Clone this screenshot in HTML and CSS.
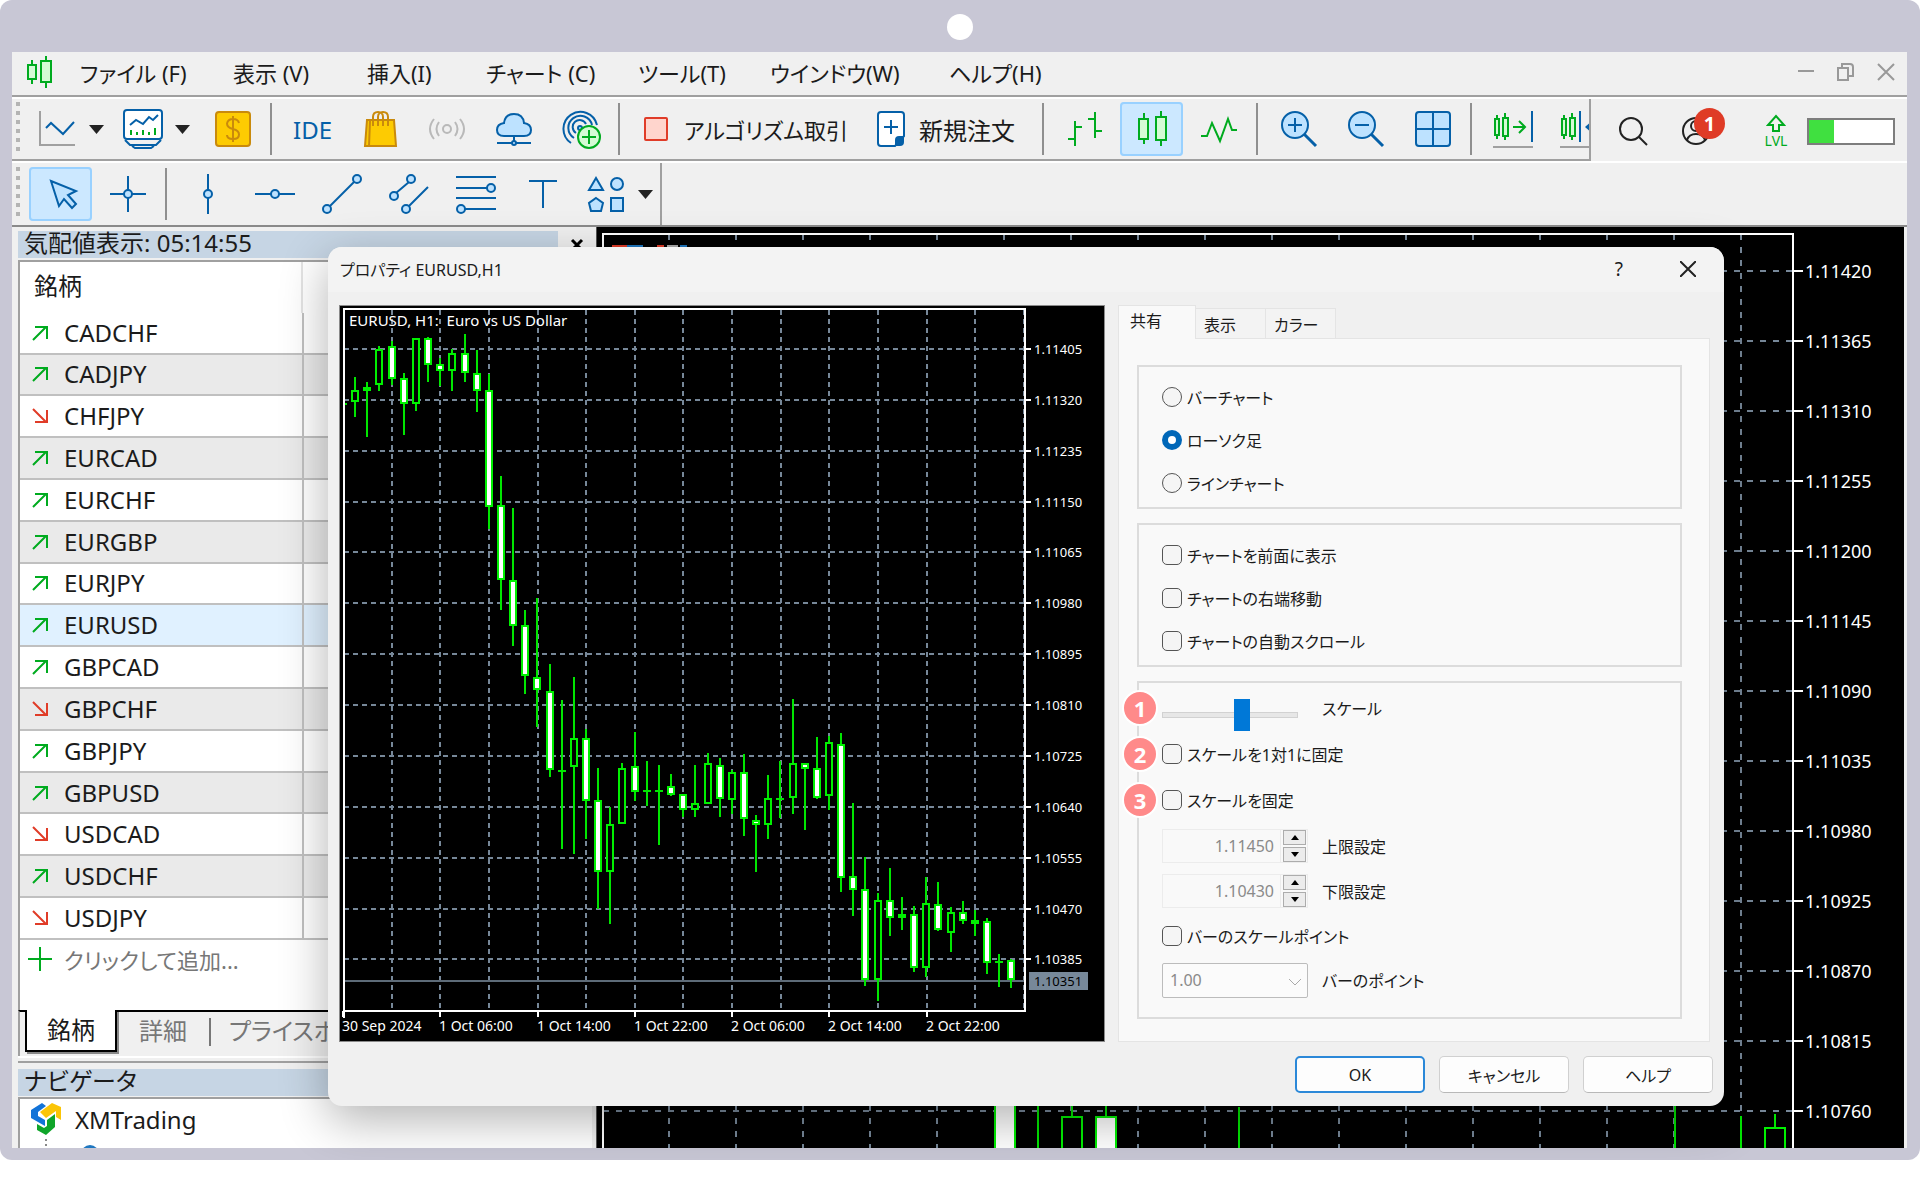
FILE: index.html
```html
<!DOCTYPE html>
<html lang="ja">
<head>
    <meta charset="UTF-8">
    <meta name="viewport" content="width=device-width, initial-scale=1.0">
    <title>プロパティ EURUSD,H1</title>
    <link rel="stylesheet" href="styles.css">
</head>
<body>
    <div class="frame">
        <div class="camera"></div>

        <div class="app">
            <!-- Menu -->
            <header class="menubar">
                <svg class="menu-logo" width="28" height="32" viewBox="0 0 28 32"><path class="candle-line" d="M6 4v5M6 23v5M20 0v5M20 26v6"/><path class="candle-box" d="M2 9h8v14H2zM15 5h10v21H15z"/></svg>
                <nav class="menu">
                    <a href="#">ファイル (F)</a>
                    <a href="#">表示 (V)</a>
                    <a href="#">挿入(I)</a>
                    <a href="#">チャート (C)</a>
                    <a href="#">ツール(T)</a>
                    <a href="#">ウインドウ(W)</a>
                    <a href="#">ヘルプ(H)</a>
                </nav>
                <div class="window-buttons">
                    <button aria-label="最小化"><svg width="20" height="20" viewBox="0 0 20 20"><path d="M2 9h16"/></svg></button>
                    <button aria-label="元に戻す"><svg width="20" height="20" viewBox="0 0 20 20"><path d="M2 6h10v12H2z"/><path d="M6 5V2h8q3 0 3 3v9h-4"/></svg></button>
                    <button aria-label="閉じる"><svg width="20" height="20" viewBox="0 0 20 20"><path d="M2 2l16 16M18 2L2 18"/></svg></button>
                </div>
            </header>

            <!-- Main toolbar -->
            <div class="toolbar">
                <div class="tools">
                    <span class="grip"></span>
                    <button class="tool drop" aria-label="ライン">
                        <svg class="icon" viewBox="0 0 40 40"><path class="grey" d="M3 2v34h35"/><path class="blue" d="M9 19l5-5 12 11 11-12"/></svg>
                        <svg class="arrow" viewBox="0 0 15 9"><path d="M0 0h15L7.500 9z"/></svg>
                    </button>
                    <button class="tool drop" aria-label="インディケータ">
                        <svg class="icon" viewBox="0 0 40 40"><rect class="blue white" x="1" y="1" width="38" height="29" rx="3"/><path class="blue" d="M7 16l6-5 7 4 6-7 4 3 5-5M2 31l5 5h26l5-5M9 37l3 2h16l3-2"/><path class="green" d="M8 26v-5M14 26v-3M20 26v-5M26 26v-3M32 26v-7"/></svg>
                        <svg class="arrow" viewBox="0 0 15 9"><path d="M0 0h15L7.500 9z"/></svg>
                    </button>
                    <button class="tool" aria-label="預金">
                        <svg class="icon" viewBox="0 0 40 40"><rect class="gold" x="3" y="3" width="34" height="34" rx="3"/><path class="gold-line" d="M26 14q-1-4-6-4t-6 4.500q0 4 6 5.500t6 5.500q0 4.500-6 4.500t-6-4M20 7v26"/></svg>
                    </button>
                    <span class="sep"></span>
                    <button class="tool ide">IDE</button>
                    <button class="tool" aria-label="マーケット">
                        <svg class="icon" viewBox="0 0 40 40"><path class="gold" d="M7 11h27l2 26H5z"/><path class="gold-line" d="M13 17V8q0-5 5-5t5 5v9M18 17V8q0-5 5-5t5 5v9M10 12l-1 25"/></svg>
                    </button>
                    <button class="tool" aria-label="シグナル">
                        <svg class="icon" viewBox="0 0 40 40"><circle class="faint" cx="20" cy="20" r="4"/><path class="faint" d="M12 13q-5 7 0 14M28 13q5 7 0 14M7 10q-8 10 0 20M33 10q8 10 0 20"/></svg>
                    </button>
                    <button class="tool" aria-label="VPS">
                        <svg class="icon" viewBox="0 0 40 40"><path class="blue fill" d="M10 27q-7 0-7-6t7-7q1-9 10-9t10 9q7 1 7 7t-7 6z"/><path class="blue" d="M20 27v7M3 34h34"/><circle class="blue fill" cx="20" cy="34" r="2"/></svg>
                    </button>
                    <button class="tool" aria-label="コピー取引">
                        <svg class="icon" viewBox="0 0 40 40"><path class="blue" d="M10 34A17 17 0 1 1 36 16M13 29A12 12 0 1 1 31 16M15 24A7 7 0 1 1 25 15"/><circle class="blue fill" cx="19" cy="19" r="2"/><circle class="candle-box" cx="28" cy="28" r="11"/><path class="green" d="M28 21v14M21 28h14"/></svg>
                    </button>
                    <span class="sep"></span>
                    <button class="tool text algo">
                        <svg width="24" height="24" viewBox="0 0 24 24"><rect class="red" x="1" y="1" width="22" height="22" rx="1"/></svg>
                        アルゴリズム取引
                    </button>
                    <button class="tool text order">
                        <svg width="28" height="36" viewBox="0 0 28 36"><path class="blue white" d="M4 1h20q3 0 3 3v21L18 35H4q-3 0-3-3V4q0-3 3-3z"/><path class="solid-blue" d="M27 25v6q0 4-4 4h-5v-6q0-4 4-4z"/><path class="blue" d="M14 9v14M7 16h14"/></svg>
                        新規注文
                    </button>
                    <span class="sep"></span>
                    <button class="tool" aria-label="バーチャート">
                        <svg class="icon" viewBox="0 0 40 40"><path class="green" d="M10 12v25M10 18h7M3 30h7M30 3v26M23 10h7M30 22h7"/></svg>
                    </button>
                    <button class="tool active" aria-label="ローソク足">
                        <svg class="icon" viewBox="0 0 40 40"><path class="green" d="M12 4v6M12 30v5M29 2v6M29 31v6"/><path class="candle-box" d="M7 10h9v20H7zM24 8h10v23H24z"/></svg>
                    </button>
                    <button class="tool" aria-label="ラインチャート">
                        <svg class="icon" viewBox="0 0 40 40"><path class="green" d="M2 27h6l5-13 8 18 8-22 4 11h5"/></svg>
                    </button>
                    <span class="sep"></span>
                    <button class="tool" aria-label="ズームイン">
                        <svg class="icon" viewBox="0 0 40 40"><circle class="blue fill" cx="16" cy="16" r="13"/><path class="blue" d="M16 9v14M9 16h14"/><path class="blue thick" d="M25 25l12 12"/></svg>
                    </button>
                    <button class="tool" aria-label="ズームアウト">
                        <svg class="icon" viewBox="0 0 40 40"><circle class="blue fill" cx="16" cy="16" r="13"/><path class="blue" d="M9 16h14"/><path class="blue thick" d="M25 25l12 12"/></svg>
                    </button>
                    <button class="tool" aria-label="ウィンドウを並べる">
                        <svg class="icon" viewBox="0 0 40 40"><rect class="blue fill" x="3" y="3" width="34" height="34" rx="3"/><path class="blue" d="M20 3v34M3 20h34"/></svg>
                    </button>
                    <span class="sep"></span>
                    <button class="tool" aria-label="自動スクロール">
                        <svg class="icon" viewBox="0 0 40 40"><path class="green" d="M4 6v4M4 26v4M12 4v5M12 27v4M20 18h12M26 12l6 6-6 6"/><path class="candle-box" d="M2 10h4v16H2zM10 9h5v18h-5z"/><path class="blue" d="M39 2v31"/><path class="grey" d="M0 38h40"/></svg>
                    </button>
                    <button class="tool" aria-label="右端移動">
                        <svg class="icon" viewBox="0 0 40 40"><path class="green" d="M4 6v4M4 26v4M12 4v5M12 27v4"/><path class="candle-box" d="M2 10h4v16H2zM10 9h5v18h-5z"/><path class="blue" d="M20 2v31"/><path class="solid-blue" d="M25 18l8-7v14z"/><path class="grey" d="M0 38h40"/></svg>
                    </button>
                </div>
                <div class="status">
                    <button aria-label="検索"><svg width="30" height="30" viewBox="0 0 30 30"><circle cx="13" cy="13" r="11"/><path d="M21 21l8 8"/></svg></button>
                    <button class="account" aria-label="アカウント">
                        <svg width="30" height="30" viewBox="0 0 30 30"><circle cx="15" cy="15" r="13"/><circle cx="15" cy="10" r="5"/><path d="M6 24q2-6 9-6t9 6"/></svg>
                        <span class="count">1</span>
                    </button>
                    <div class="level">
                        <svg width="20" height="20" viewBox="0 0 20 20"><path d="M7 17v-6H2l8-9 8 9h-5v6z"/></svg>
                        <span>LVL</span>
                    </div>
                    <div class="meter"><span></span></div>
                </div>
            </div>

            <!-- Drawing tools -->
            <div class="toolbar drawing">
                <div class="tools">
                    <span class="grip"></span>
                    <button class="tool active" aria-label="カーソル">
                        <svg class="icon" viewBox="0 0 40 40"><path class="blue fill" d="M10 7l25 10-8 4 8 9-4 4-8-9-5 7z"/></svg>
                    </button>
                    <button class="tool" aria-label="十字">
                        <svg class="icon" viewBox="0 0 40 40"><path class="blue" d="M20 2v36M2 20h36"/><circle class="blue fill" cx="20" cy="20" r="4"/></svg>
                    </button>
                    <span class="sep"></span>
                    <button class="tool" aria-label="垂直線">
                        <svg class="icon" viewBox="0 0 40 40"><path class="blue" d="M20 0v40"/><circle class="blue fill" cx="20" cy="20" r="4"/></svg>
                    </button>
                    <button class="tool" aria-label="水平線">
                        <svg class="icon" viewBox="0 0 40 40"><path class="blue" d="M0 20h40"/><circle class="blue fill" cx="20" cy="20" r="4"/></svg>
                    </button>
                    <button class="tool" aria-label="トレンドライン">
                        <svg class="icon" viewBox="0 0 40 40"><path class="blue" d="M8 32L32 8"/><circle class="blue fill" cx="5" cy="35" r="4"/><circle class="blue fill" cx="35" cy="5" r="4"/></svg>
                    </button>
                    <button class="tool" aria-label="チャンネル">
                        <svg class="icon" viewBox="0 0 40 40"><path class="blue" d="M7 19L20 8M20 32L39 13"/><circle class="blue fill" cx="5" cy="22" r="4"/><circle class="blue fill" cx="22" cy="5" r="4"/><circle class="blue fill" cx="17" cy="35" r="4"/></svg>
                    </button>
                    <button class="tool" aria-label="フィボナッチ">
                        <svg class="icon" viewBox="0 0 40 40"><path class="blue" d="M0 3h40M0 14h32M0 24h40M8 35h32"/><circle class="blue fill" cx="35" cy="14" r="4"/><circle class="blue fill" cx="5" cy="35" r="4"/></svg>
                    </button>
                    <button class="tool" aria-label="テキスト">
                        <svg class="icon" viewBox="0 0 40 40"><path class="blue" d="M6 7h28M20 7v27"/></svg>
                    </button>
                    <button class="tool drop" aria-label="図形">
                        <svg class="icon" viewBox="0 0 40 40"><path class="blue fill" d="M10 4l7 12H3z"/><circle class="blue fill" cx="31" cy="10" r="6"/><path class="blue fill" d="M10 24l7 5-2 8H5l-2-8z"/><rect class="blue fill" x="25" y="24" width="12" height="13"/></svg>
                        <svg class="arrow" viewBox="0 0 15 9"><path d="M0 0h15L7.500 9z"/></svg>
                    </button>
                </div>
            </div>

            <div class="workspace">
                <!-- Market watch and navigator -->
                <aside class="dock">
                    <div class="dock-title">
                        <h2>気配値表示: 05:14:55</h2>
                        <button aria-label="閉じる"><svg width="14" height="14" viewBox="0 0 14 14"><path d="M2 2l10 10M12 2L2 12"/></svg></button>
                    </div>
                    <div class="watch">
                        <div class="watch-head">銘柄</div>
                        <table class="symbols">
                            <tbody id="symbols"></tbody>
                        </table>
                        <button class="add">
                            <svg width="24" height="24" viewBox="0 0 24 24"><path d="M12 0v24M0 12h24"/></svg>
                            クリックして追加...
                        </button>
                    </div>
                    <div class="dock-tabs">
                        <button class="current">銘柄</button>
                        <button>詳細</button>
                        <button class="last">プライスボード</button>
                    </div>
                    <div class="dock-title second">
                        <h2>ナビゲータ</h2>
                    </div>
                    <div class="navigator">
                        <div class="account-row">
                            <svg width="30" height="32" viewBox="0 0 30 32"><path fill="#1273d8" d="M0 7l11-7 4 3-8 6v4l7 4v6L0 15z"/><path fill="#fbc506" d="M9 9l12-9 9 4v13l-5-3V8l-10 7z"/><path fill="#0fa52a" d="M16 17l8-6v13l-9 8-9-5v-6l7 4 3-2z"/></svg>
                            XMTrading
                        </div>
                        <svg class="tree" width="60" height="16" viewBox="0 0 60 16"><path d="M4 3v13"/><circle cx="48" cy="18" r="9"/></svg>
                    </div>
                </aside>

                <main class="chart">
                    <svg id="mainChart"></svg>
                </main>
            </div>
        </div>

        <!-- Chart properties -->
        <div class="dialog" role="dialog" aria-labelledby="dialogTitle">
            <div class="dialog-title">
                <h1 id="dialogTitle">プロパティ EURUSD,H1</h1>
                <button>?</button>
                <button aria-label="閉じる"><svg width="16" height="16" viewBox="0 0 16 16"><path d="M0 0l16 16M16 0L0 16"/></svg></button>
            </div>
            <div class="dialog-body">
                <div class="preview">
                    <svg id="previewChart" viewBox="0 0 764 735"></svg>
                </div>
                <form class="settings">
                    <div class="tabs">
                        <button type="button" class="current">共有</button>
                        <button type="button">表示</button>
                        <button type="button">カラー</button>
                    </div>
                    <div class="pane">
                        <fieldset>
                            <label class="option"><input type="radio" name="type">バーチャート</label>
                            <label class="option"><input type="radio" name="type" checked>ローソク足</label>
                            <label class="option"><input type="radio" name="type">ラインチャート</label>
                        </fieldset>
                        <fieldset>
                            <label class="option"><input type="checkbox">チャートを前面に表示</label>
                            <label class="option"><input type="checkbox">チャートの右端移動</label>
                            <label class="option"><input type="checkbox">チャートの自動スクロール</label>
                        </fieldset>
                        <fieldset class="scale">
                            <div class="row">
                                <span class="badge">1</span>
                                <input type="range" id="scale" min="0" max="5" value="3">
                                <label for="scale">スケール</label>
                            </div>
                            <div class="row">
                                <span class="badge">2</span>
                                <label class="option"><input type="checkbox">スケールを1対1に固定</label>
                            </div>
                            <div class="row">
                                <span class="badge">3</span>
                                <label class="option"><input type="checkbox">スケールを固定</label>
                            </div>
                            <div class="row spin-row">
                                <div class="spin">
                                    <input type="text" id="max" value="1.11450" disabled>
                                    <div class="steps">
                                        <button type="button" aria-label="増やす"><svg width="8" height="5" viewBox="0 0 8 5"><path d="M0 5h8L4 0z"/></svg></button>
                                        <button type="button" aria-label="減らす"><svg width="8" height="5" viewBox="0 0 8 5"><path d="M0 0h8L4 5z"/></svg></button>
                                    </div>
                                </div>
                                <label for="max">上限設定</label>
                            </div>
                            <div class="row spin-row">
                                <div class="spin">
                                    <input type="text" id="min" value="1.10430" disabled>
                                    <div class="steps">
                                        <button type="button" aria-label="増やす"><svg width="8" height="5" viewBox="0 0 8 5"><path d="M0 5h8L4 0z"/></svg></button>
                                        <button type="button" aria-label="減らす"><svg width="8" height="5" viewBox="0 0 8 5"><path d="M0 0h8L4 5z"/></svg></button>
                                    </div>
                                </div>
                                <label for="min">下限設定</label>
                            </div>
                            <div class="row">
                                <label class="option"><input type="checkbox">バーのスケールポイント</label>
                            </div>
                            <div class="row select-row">
                                <div class="select">
                                    <select id="points" disabled><option>1.00</option></select>
                                    <svg width="12" height="8" viewBox="0 0 12 8"><path d="M0 1l6 6 6-6"/></svg>
                                </div>
                                <label for="points">バーのポイント</label>
                            </div>
                        </fieldset>
                    </div>
                </form>
            </div>
            <div class="dialog-buttons">
                <button class="ok">OK</button>
                <button>キャンセル</button>
                <button>ヘルプ</button>
            </div>
        </div>
    </div>

    <script src="script.js"></script>
</body>
</html>
```

FILE: styles.css
```css
* {
    margin: 0;
    padding: 0;
    box-sizing: border-box;
}

body {
    background: #fff;
    font-family: "Noto Sans", "Noto Sans CJK JP", sans-serif;
    font-feature-settings: "palt";
    color: #1b1b1b;
    overflow: hidden;
}

button, input, select {
    font: inherit;
    font-feature-settings: inherit;
    color: inherit;
    border: none;
    background: none;
}

a {
    color: inherit;
    text-decoration: none;
}

svg {
    display: block;
    flex-shrink: 0;
    fill: none;
}

.frame {
    position: relative;
    padding: 14px 13px 12px 12px;
    background: #c8c7d5;
    border-radius: 12px;
}

.camera {
    width: 26px;
    height: 26px;
    margin: 0 auto 12px;
    border-radius: 50%;
    background: #fff;
}

.app {
    background: #f0f0f0;
    overflow: hidden;
}

/* Menu */
.menubar {
    display: flex;
    align-items: center;
    height: 45px;
    padding: 0 11px 4px 14px;
    border-bottom: 2px solid #a0a0a0;
    font-size: 22px;
}

.menu-logo {
    margin-right: 26px;
}

.menu {
    flex: 1;
    display: grid;
    grid-template-columns: 153px 134px 119px 152px 132px 179px 1fr;
    white-space: nowrap;
}

.window-buttons {
    display: flex;
    gap: 20px;
}

.window-buttons svg {
    stroke: #999;
    stroke-width: 2;
}

/* Toolbars */
.toolbar {
    display: flex;
    height: 64px;
    border-top: 2px solid #fff;
}

.toolbar .tools {
    flex: 1;
    min-width: 0;
    display: flex;
    align-items: center;
    gap: 4px;
    padding-left: 4px;
    overflow: hidden;
    border-bottom: 2px solid #a0a0a0;
    border-right: 2px solid #a0a0a0;
}

.toolbar.drawing {
    height: 66px;
    border-bottom: 2px solid #8a8a8a;
}

.toolbar.drawing .tools {
    flex: none;
    border-bottom: none;
}

.grip {
    flex-shrink: 0;
    width: 4px;
    height: 54px;
    margin-right: 5px;
    background: repeating-linear-gradient(#b4b4b4 0 4px, #f0f0f0 4px 9px);
}

.sep {
    flex-shrink: 0;
    width: 2px;
    height: 52px;
    margin: 0 5px 0 2px;
    background: #8f8f8f;
}

.tool {
    flex-shrink: 0;
    display: flex;
    align-items: center;
    justify-content: center;
    width: 63px;
    height: 54px;
    border-radius: 4px;
}

.tool.active {
    background: #cce8ff;
    box-shadow: inset 0 0 0 2px #99d1ff;
}

.tool.drop {
    width: 82px;
    gap: 12px;
}

.tool.ide {
    font-size: 24px;
    color: #0560a8;
}

.tool.text {
    justify-content: flex-start;
    padding-left: 15px;
    gap: 16px;
    font-size: 24px;
    white-space: nowrap;
}

.tool.algo {
    width: 229px;
    font-size: 22px;
}

.tool.order {
    width: 174px;
    gap: 14px;
}

.icon {
    width: 40px;
    height: 40px;
}

.arrow {
    width: 15px;
    height: 9px;
    fill: #222;
}

.blue, .green, .grey, .faint, .candle-line, .candle-box {
    stroke-width: 2;
}

.blue {
    stroke: #0560a8;
}

.blue.fill {
    fill: #bde2ff;
}

.blue.white {
    fill: #fff;
}

.blue.thick {
    stroke-width: 3;
}

.solid-blue {
    fill: #0560a8;
}

.green, .candle-line, .candle-box {
    stroke: #00ab1f;
}

.candle-box {
    fill: #d5fbd5;
}

.grey {
    stroke: #a0a0a0;
}

.faint {
    stroke: #b9b9b9;
}

.red {
    fill: #ffd5cd;
    stroke: #e03c28;
    stroke-width: 2;
}

.gold {
    fill: #fdcb02;
    stroke: #c98a0c;
    stroke-width: 2;
}

.gold-line {
    stroke: #c98a0c;
    stroke-width: 2;
}

.status {
    display: flex;
    align-items: center;
    width: 316px;
    padding: 2px 12px 0 27px;
}

.status button svg {
    stroke: #222;
    stroke-width: 2;
}

.account {
    position: relative;
    margin-left: 33px;
}

.count {
    position: absolute;
    left: 13px;
    top: -8px;
    width: 31px;
    height: 31px;
    border-radius: 50%;
    background: #df3b26;
    color: #fff;
    font-size: 20px;
    font-weight: bold;
    line-height: 31px;
}

.level {
    width: 44px;
    margin-left: 43px;
    font-size: 14px;
    line-height: 14px;
    text-align: center;
    color: #00ab1f;
}

.level svg {
    margin: 0 auto;
    stroke: #00ab1f;
    stroke-width: 2;
}

.meter {
    margin-left: auto;
    width: 88px;
    height: 27px;
    border: 2px solid #7d7d7d;
    background: #fff;
}

.meter span {
    display: block;
    width: 30%;
    height: 100%;
    background: #40e040;
}

/* Market watch */
.workspace {
    display: flex;
}

.dock {
    width: 584px;
    padding: 4px 4px 0 6px;
    background: #f0f0f0;
}

.dock-title {
    display: flex;
    align-items: center;
    justify-content: space-between;
    height: 27px;
    margin-bottom: 2px;
    padding-right: 8px;
}

.dock-title h2 {
    width: 540px;
    height: 27px;
    padding-left: 6px;
    background: #c6d5e4;
    font-size: 24px;
    font-weight: normal;
    line-height: 24px;
}

.dock-title svg {
    stroke: #000;
    stroke-width: 3;
}

.watch {
    height: 750px;
    display: flex;
    flex-direction: column;
    background: #fff;
    border-left: 2px solid #a0a0a0;
    border-top: 2px solid #a0a0a0;
    font-size: 24px;
}

.watch-head {
    width: 283px;
    height: 51px;
    padding: 0 14px;
    line-height: 48px;
    border-right: 2px solid #e4e4e4;
}

.symbols {
    width: 100%;
    height: 627px;
    border-collapse: collapse;
    table-layout: fixed;
    line-height: 30px;
}

.symbols td {
    border-bottom: 2px solid #c0c0c0;
}

.symbols td:first-child {
    width: 283px;
    padding-left: 12px;
    border-right: 2px solid #c0c0c0;
}

.symbols tr:nth-child(even) {
    background: #eaeaea;
}

.symbols tr.selected {
    background: #e0f1ff;
}

.symbol {
    display: flex;
    align-items: center;
    gap: 15px;
}

.symbol svg {
    stroke: #00ab1f;
    stroke-width: 2;
}

.symbol.down svg {
    stroke: #e03c28;
}

.add {
    display: flex;
    align-items: center;
    gap: 12px;
    height: 38px;
    padding-left: 8px;
    font-size: 22px;
    color: #777;
}

.add svg {
    stroke: #00ab1f;
    stroke-width: 2;
}

.dock-tabs {
    display: flex;
    height: 46px;
    padding-left: 5px;
    border-left: 2px solid #a0a0a0;
    border-top: 2px solid #000;
    box-shadow: 0 2px 0 #fff;
    font-size: 24px;
    color: #777;
    white-space: nowrap;
}

.dock-tabs button {
    height: 34px;
}

.dock-tabs .current {
    width: 92px;
    height: 42px;
    margin-top: -2px;
    padding-bottom: 4px;
    border: 2px solid #000;
    border-top: none;
    background: #fff;
    box-shadow: 2px 2px 0 #888;
    color: #1b1b1b;
}

.dock-tabs button:nth-child(2) {
    width: 92px;
}

.dock-tabs .last {
    position: relative;
    width: 120px;
    padding-left: 20px;
    text-align: left;
    overflow: hidden;
}

.dock-tabs .last::before {
    content: "";
    position: absolute;
    left: 0;
    top: 6px;
    width: 2px;
    height: 28px;
    background: #777;
}

.dock-title.second {
    height: 34px;
    margin-top: 5px;
    padding-top: 6px;
    border-top: 2px solid #a0a0a0;
}

.navigator {
    height: 51px;
    padding: 3px 0 0 11px;
    background: #fff;
    border-left: 2px solid #a0a0a0;
    border-top: 2px solid #a0a0a0;
    overflow: hidden;
}

.account-row {
    display: flex;
    align-items: center;
    gap: 14px;
    height: 34px;
    font-size: 24px;
}

.tree {
    margin-left: 11px;
    stroke: #888;
    stroke-width: 2;
    stroke-dasharray: 2 3;
}

.tree circle {
    stroke: none;
    fill: #1f77c0;
}

/* Charts */
.chart {
    flex: 1;
    min-width: 0;
    margin-right: 3px;
    background: #000;
    border-left: 1px solid #555;
    overflow: hidden;
}

#mainChart {
    width: 100%;
    height: 100%;
    font-size: 18px;
}

.grid-line {
    stroke: #778899;
    stroke-width: 2;
    stroke-dasharray: 6 7;
}

.axis {
    stroke: #fff;
    stroke-width: 2;
}

.price-line {
    stroke: #5d6b78;
    stroke-width: 2;
}

.wick {
    stroke: #00e600;
    stroke-width: 2;
}

.body {
    fill: #000;
    stroke: #00f000;
    stroke-width: 2;
}

.body.bear {
    fill: #fff;
}

text {
    fill: #fff;
}

.price-box {
    fill: #778899;
}

.price-now {
    fill: #000;
}

#previewChart {
    width: 764px;
    height: 735px;
    font-size: 13px;
}

#previewChart .grid-line {
    stroke-dasharray: 5 4;
}

.time {
    font-size: 14px;
}

.legend {
    font-size: 15px;
}

/* Dialog */
.dialog {
    position: absolute;
    left: 328px;
    top: 247px;
    width: 1396px;
    background: #f0f0f0;
    border-radius: 14px;
    box-shadow: 0 14px 48px rgba(0, 0, 0, 0.3);
    overflow: hidden;
    font-size: 16px;
}

.dialog-title {
    display: flex;
    align-items: center;
    height: 45px;
    padding: 0 28px 2px 12px;
    background: #f3f3f3;
}

.dialog-title h1 {
    flex: 1;
    font-size: 16px;
    font-weight: normal;
}

.dialog-title button:first-of-type {
    margin-right: 57px;
    font-size: 19px;
}

.dialog-title svg {
    stroke: #222;
    stroke-width: 2;
}

.dialog-body {
    display: flex;
    justify-content: space-between;
    padding: 13px 14px 0 11px;
}

.preview {
    width: 766px;
    height: 737px;
    background: #000;
    border: 1px solid #8a8a8a;
}

.settings {
    width: 592px;
}

.tabs {
    display: flex;
    align-items: flex-end;
    height: 34px;
    margin-bottom: -1px;
}

.tabs button {
    width: 71px;
    height: 31px;
    margin-right: -1px;
    padding-left: 8px;
    text-align: left;
    border: 1px solid #e4e4e4;
    background: #f3f3f3;
}

.tabs .current {
    position: relative;
    width: 78px;
    height: 34px;
    padding: 0 0 5px 11px;
    border-bottom: none;
    background: #f9f9f9;
}

.pane {
    display: flex;
    flex-direction: column;
    gap: 14px;
    height: 704px;
    padding: 26px 27px 0 18px;
    background: #f9f9f9;
    border: 1px solid #e4e4e4;
}

fieldset {
    height: 144px;
    padding: 8px 0 0 23px;
    border: 2px solid #dcdcdc;
}

.option {
    display: flex;
    align-items: center;
    gap: 5px;
    height: 43px;
}

.option input {
    appearance: none;
    width: 20px;
    height: 20px;
    border: 1px solid #555;
    border-radius: 5px;
    background: #f5f5f5;
}

.option input[type="radio"] {
    border-radius: 50%;
}

.option input[type="radio"]:checked {
    border: 6px solid #0067b8;
    background: #fff;
}

.scale {
    height: 338px;
    padding-top: 2px;
}

.row {
    position: relative;
    display: flex;
    align-items: center;
    height: 46px;
}

.spin-row {
    height: 45px;
}

.select-row {
    height: 42px;
}

.badge {
    position: absolute;
    left: -40px;
    width: 36px;
    height: 36px;
    border: 2px solid #fff;
    border-radius: 50%;
    background: #ff8a8a;
    color: #fff;
    font-size: 22px;
    font-weight: bold;
    line-height: 32px;
    text-align: center;
}

input[type="range"] {
    appearance: none;
    align-self: flex-end;
    width: 136px;
    height: 32px;
    margin-right: 24px;
}

input[type="range"]::-webkit-slider-runnable-track {
    height: 6px;
    border: 1px solid #d2d2d2;
    background: #e7e7e7;
}

input[type="range"]::-webkit-slider-thumb {
    appearance: none;
    width: 16px;
    height: 32px;
    margin-top: -14px;
    background: #0078d7;
}

.spin {
    display: flex;
    gap: 2px;
    width: 146px;
    height: 34px;
    margin-right: 14px;
    border: 1px solid #ececec;
}

.spin input {
    width: 118px;
    padding-right: 6px;
    text-align: right;
    border-right: 1px solid #ececec;
    color: #8a8a8a;
}

.steps {
    display: flex;
    flex-direction: column;
    gap: 2px;
    width: 23px;
}

.steps button {
    flex: 1;
    display: flex;
    align-items: center;
    justify-content: center;
    border: 1px solid #acacac;
    background: #ececec;
}

.steps svg {
    fill: #000;
}

.select {
    position: relative;
    width: 146px;
    margin-right: 14px;
}

.select select {
    appearance: none;
    width: 146px;
    height: 35px;
    padding-left: 7px;
    border: 1px solid #bcbcbc;
    border-radius: 2px;
    background: #fbfbfb;
    color: #8a8a8a;
    opacity: 1;
}

.select svg {
    position: absolute;
    right: 7px;
    top: 15px;
    stroke: #aaa;
}

.dialog-buttons {
    display: flex;
    justify-content: flex-end;
    gap: 14px;
    padding: 14px 11px 13px;
}

.dialog-buttons button {
    width: 130px;
    height: 37px;
    border: 1px solid #d0d0d0;
    border-bottom-color: #b8b8b8;
    border-radius: 5px;
    background: #fdfdfd;
}

.dialog-buttons .ok {
    border: 2px solid #2b88d8;
}
```

FILE: script.js
```js
const symbols = [
    ['CADCHF', 'up'], ['CADJPY', 'up'], ['CHFJPY', 'down'], ['EURCAD', 'up'], ['EURCHF', 'up'],
    ['EURGBP', 'up'], ['EURJPY', 'up'], ['EURUSD', 'up'], ['GBPCAD', 'up'], ['GBPCHF', 'down'],
    ['GBPJPY', 'up'], ['GBPUSD', 'up'], ['USDCAD', 'down'], ['USDCHF', 'up'], ['USDJPY', 'down']
];

const arrows = {
    up: 'M1 15L14 2M3 2h12v12',
    down: 'M1 1l13 13M3 14h12V2'
};

document.getElementById('symbols').innerHTML = symbols.map(([name, dir]) => `
    <tr class="${name === 'EURUSD' ? 'selected' : ''}">
        <td><div class="symbol ${dir}"><svg width="17" height="16" viewBox="0 0 17 16"><path d="${arrows[dir]}"/></svg>${name}</div></td>
        <td></td>
    </tr>`).join('');

function line(cls, x1, y1, x2, y2) {
    return `<path class="${cls}" d="M${x1} ${y1}L${x2} ${y2}"/>`;
}

function label(x, y, text, cls = '') {
    return `<text class="${cls}" x="${x}" y="${y}" xml:space="preserve">${text}</text>`;
}

// x, high, low, body top, body bottom, bear, half width
function candle(x, high, low, top, bottom, bear, half) {
    return line('wick', x, high, x, low) +
        `<rect class="body ${bear ? 'bear' : ''}" x="${x - half}" y="${top}" width="${half * 2}" height="${bottom - top}"/>`;
}

// Main chart
function drawMain() {
    let out = '';
    for (let x = 72; x < 1190; x += 67) out += line('grid-line', x, 7, x, 930);
    for (let i = 0; i < 13; i++) {
        const y = 44 + i * 70;
        out += line('grid-line', 6, y, 1196, y);
        out += line('axis', 1196, y, 1206, y);
        out += label(1208, y + 7, (1.1142 - i * 0.00055).toFixed(5));
    }
    out += line('axis', 5, 7, 1197, 7) + line('axis', 6, 7, 6, 930) + line('axis', 1196, 7, 1196, 930);
    out += '<path fill="#e03c28" d="M15 18h15v4H15zM60 18h7v4h-7z"/><path fill="#1f77c0" d="M30 18h16v4H30zM83 18h7v4h-7z"/><path fill="#aaa" d="M70 18h11v4H70z"/>';
    out += candle(408, 800, 940, 820, 940, true, 10);
    out += line('wick', 441, 860, 441, 930);
    out += candle(475, 860, 890, 890, 940, false, 10);
    out += candle(509, 860, 890, 890, 940, true, 10);
    out += line('wick', 642, 880, 642, 930);
    out += line('wick', 1078, 860, 1078, 930);
    out += line('wick', 1144, 889, 1144, 930);
    out += candle(1178, 887, 901, 901, 940, false, 10);
    document.getElementById('mainChart').innerHTML = out;
}

// high, low, body top, body bottom, bear
const bars = [
    [98, 98, 98, 98, 0], [72, 112, 85, 97, 0], [77, 132, 82, 86, 0], [41, 86, 44, 80, 0],
    [36, 80, 41, 74, 1], [68, 130, 73, 99, 1], [33, 106, 33, 99, 0], [32, 77, 33, 60, 1],
    [53, 81, 59, 66, 1], [44, 86, 48, 66, 0], [29, 77, 48, 68, 1], [45, 107, 68, 86, 1],
    [69, 224, 85, 202, 1], [171, 305, 200, 275, 1], [203, 341, 275, 321, 1], [305, 389, 320, 371, 1],
    [293, 422, 372, 385, 1], [359, 472, 386, 465, 1], [394, 543, 465, 465, 0], [372, 549, 433, 462, 0],
    [424, 534, 433, 496, 1], [463, 604, 495, 567, 1], [502, 619, 519, 567, 0], [458, 519, 463, 519, 0],
    [427, 496, 461, 487, 1], [455, 500, 485, 485, 0], [459, 539, 485, 485, 0], [469, 491, 481, 490, 1],
    [489, 512, 489, 505, 1], [460, 512, 498, 505, 0], [448, 499, 458, 499, 0], [453, 512, 460, 494, 1],
    [465, 509, 467, 495, 0], [449, 531, 467, 514, 1], [510, 567, 515, 520, 1], [470, 534, 493, 520, 0],
    [455, 512, 493, 493, 0], [394, 509, 458, 493, 0], [458, 525, 458, 464, 1], [432, 494, 463, 493, 1],
    [431, 505, 437, 491, 0], [428, 587, 439, 573, 1], [498, 611, 571, 585, 1], [552, 681, 584, 675, 1],
    [588, 696, 595, 675, 0], [563, 631, 595, 613, 1], [592, 625, 609, 613, 0], [601, 667, 609, 663, 1],
    [572, 672, 598, 663, 0], [577, 626, 599, 625, 1], [602, 647, 607, 628, 0], [596, 619, 607, 616, 1],
    [605, 631, 615, 619, 1], [613, 669, 616, 658, 1], [648, 681, 656, 656, 0], [654, 683, 655, 675, 1]
];

const times = ['30 Sep 2024', '1 Oct 06:00', '1 Oct 14:00', '1 Oct 22:00', '2 Oct 06:00', '2 Oct 14:00', '2 Oct 22:00'];

// Preview in the dialog
function drawPreview() {
    let out = '';
    for (let i = 1; i <= 14; i++) {
        const x = Math.round(3 + i * 48.64);
        out += line('grid-line', x, 4, x, 705);
    }
    for (let i = 0; i < 13; i++) {
        const y = Math.round(43 + i * 50.87);
        out += line('grid-line', 4, y, 684, y) + line('axis', 685, y, 691, y);
        out += label(694, y + 5, (1.11405 - i * 0.00085).toFixed(5));
    }
    out += line('price-line', 4, 675, 684, 675);
    bars.forEach(([high, low, top, bottom, bear], i) => {
        const x = Math.round(3 + i * 12.15);
        if (top === bottom) {
            // doji: wick and a short bar only
            out += (low > high ? line('wick', x, high, x, low) : '') + line('wick', Math.max(x - 4, 3), top, x + 4, top);
        } else {
            // the wick stays outside the body
            out += line('wick', x, high - 1, x, top) + candle(x, bottom - 2, low - 1, top, bottom - 2, bear, 3);
        }
    });
    out += line('axis', 3, 3, 686, 3) + line('axis', 4, 3, 4, 712) + line('axis', 685, 3, 685, 706) + line('axis', 3, 705, 686, 705);
    times.forEach((time, i) => {
        const x = Math.round(3 + i * 97.28);
        out += line('axis', x, 705, x, 711) + label(i ? x - 1 : 2, 725, time, 'time');
    });
    out += label(9, 20, 'EURUSD, H1:  Euro vs US Dollar', 'legend');
    out += '<rect class="price-box" x="689" y="666" width="59" height="18"/>' + label(694, 680, '1.10351', 'price-now');
    document.getElementById('previewChart').innerHTML = out;
}

drawMain();
drawPreview();
```
